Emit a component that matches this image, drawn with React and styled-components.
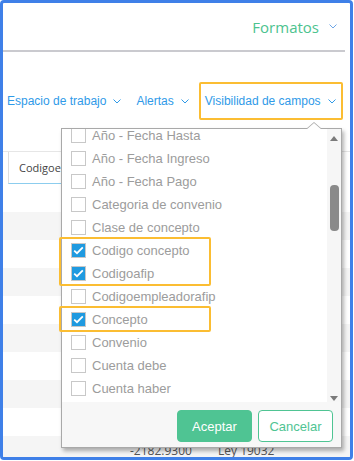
import React from "react"
import styled, { createGlobalStyle } from "styled-components"

const GlobalStyle = createGlobalStyle`
  body {
    margin: 0;
    background: #ffffff;
    font-family: "Liberation Sans", Arial, sans-serif;
  }
`

const fields = [
  { label: "Año - Fecha Hasta" },
  { label: "Año - Fecha Ingreso" },
  { label: "Año - Fecha Pago" },
  { label: "Categoria de convenio" },
  { label: "Clase de concepto" },
  { label: "Codigo concepto", checked: true, group: 1 },
  { label: "Codigoafip", checked: true, group: 1 },
  { label: "Codigoempleadorafip" },
  { label: "Concepto", checked: true, group: 2 },
  { label: "Convenio" },
  { label: "Cuenta debe" },
  { label: "Cuenta haber" },
]

function Chevron({ color }) {
  return (
    <svg width="8" height="5" viewBox="0 0 8 5" style={{ flexShrink: 0 }}>
      <polyline points="0.5,0.5 4,4 7.5,0.5" fill="none" stroke={color} strokeWidth="1" />
    </svg>
  )
}

function Check() {
  return (
    <svg width="11" height="9" viewBox="0 0 11 9">
      <polyline points="1.2,4.6 4,7.2 9.8,1.4" fill="none" stroke="#ffffff" strokeWidth="1.8" />
    </svg>
  )
}

function FieldRow({ field }) {
  return (
    <Item>
      <Box $checked={field.checked}>{field.checked && <Check />}</Box>
      <ItemLabel>{field.label}</ItemLabel>
    </Item>
  )
}

function App() {
  // group the highlighted fields so each group gets one orange frame
  const blocks = []
  fields.forEach((f) => {
    const last = blocks[blocks.length - 1]
    if (f.group && last && last.group === f.group) last.items.push(f)
    else blocks.push({ group: f.group, items: [f] })
  })

  return (
    <>
      <GlobalStyle />
      <Frame>
        <TopBar>
          <Formatos>Formatos</Formatos>
          <Chevron color="#6ea6e6" />
        </TopBar>

        <Toolbar>
          <ToolItem $space={15}>
            Espacio de trabajo <Chevron color="#2f9ae8" />
          </ToolItem>
          <ToolItem $space={10}>
            Alertas <Chevron color="#2f9ae8" />
          </ToolItem>
          <MarkedTool>
            Visibilidad de campos <Chevron color="#2f9ae8" />
          </MarkedTool>
        </Toolbar>

        <Table>
          <HeaderRow>
            <HeaderCell>Codigoe</HeaderCell>
          </HeaderRow>
          {Array.from({ length: 10 }).map((_, i) => (
            <Row key={i} $striped={i % 2 === 1}>
              {i === 9 && (
                <>
                  <Cell />
                  <Cell>-2182.9300</Cell>
                  <Cell>Ley 19032</Cell>
                </>
              )}
            </Row>
          ))}
        </Table>

        <Dropdown>
          <ListArea>
            <Items>
              {blocks.map((b, i) =>
                b.group ? (
                  <Marked key={i}>
                    {b.items.map((f) => (
                      <FieldRow key={f.label} field={f} />
                    ))}
                  </Marked>
                ) : (
                  <FieldRow key={i} field={b.items[0]} />
                )
              )}
            </Items>
            <ScrollTrack>
              <ArrowUp />
              <Thumb />
              <Spacer />
              <ArrowDown />
            </ScrollTrack>
          </ListArea>
          <Footer>
            <PrimaryButton>Aceptar</PrimaryButton>
            <GhostButton>Cancelar</GhostButton>
          </Footer>
        </Dropdown>
      </Frame>
    </>
  )
}

export default App

const Frame = styled.div`
  position: relative;
  box-sizing: border-box;
  width: 353px;
  height: 460px;
  border: 3px solid #3f80e8;
  border-radius: 4px;
  background: #ffffff;
  overflow: hidden;
  display: flex;
  flex-direction: column;
`

const TopBar = styled.div`
  height: 47px;
  flex-shrink: 0;
  margin-right: 5px;
  padding-right: 8px;
  border-bottom: 2px solid #cacacf;
  display: flex;
  align-items: center;
  justify-content: flex-end;
  gap: 10px;
`

const Formatos = styled.span`
  font-family: "Open Sans", sans-serif;
  font-size: 15px;
  color: #4cc38f;
`

const Toolbar = styled.div`
  flex-shrink: 0;
  display: flex;
  align-items: center;
  padding: 30px 0 0 4px;
  margin-bottom: 31px;
`

const ToolItem = styled.div`
  display: flex;
  align-items: center;
  gap: 7px;
  margin-right: ${(p) => p.$space}px;
  font-size: 12px;
  color: #2f9ae8;
  white-space: nowrap;
`

const MarkedTool = styled(ToolItem)`
  box-sizing: border-box;
  height: 38px;
  margin-right: 0;
  padding: 0 5px 0 4px;
  border: 2px solid #fbbd32;
  border-radius: 2px;
`

const Table = styled.div`
  flex-shrink: 0;
  font-family: "Open Sans", sans-serif;
`

const HeaderRow = styled.div`
  height: 33px;
  box-sizing: border-box;
  border-top: 1px solid #e6e6e6;
  padding-left: 5px;
  display: flex;
`

const HeaderCell = styled.div`
  box-sizing: border-box;
  width: 53px;
  border-left: 1px solid #dedede;
  border-bottom: 1px solid #8ccdee;
  padding-left: 10px;
  display: flex;
  align-items: center;
  font-size: 11px;
  color: #444444;
  white-space: nowrap;
  overflow: hidden;
`

const Row = styled.div`
  height: 28px;
  background: ${(p) => (p.$striped ? "#f5f5f5" : "#ffffff")};
  padding-left: 5px;
  display: grid;
  grid-template-columns: 115px 88px 1fr;
  align-items: center;
`

const Cell = styled.div`
  padding-left: 7px;
  font-size: 12px;
  color: #555555;
  white-space: nowrap;
`

const Dropdown = styled.div`
  position: absolute;
  left: 58px;
  top: 125px;
  width: 281px;
  height: 320px;
  box-sizing: border-box;
  border: 1px solid #a9a9a9;
  background: #ffffff;
  box-shadow: 2px 3px 4px rgba(0, 0, 0, 0.3);
  display: flex;
  flex-direction: column;

  &::before,
  &::after {
    content: "";
    position: absolute;
    left: 244px;
    border-left: 8px solid transparent;
    border-right: 8px solid transparent;
  }
  &::before {
    top: -7px;
    border-bottom: 7px solid #a9a9a9;
  }
  &::after {
    top: -6px;
    border-bottom: 7px solid #ffffff;
  }
`

const ListArea = styled.div`
  height: 273px;
  display: flex;
`

const Items = styled.div`
  flex: 1;
  overflow-x: visible;
  overflow-y: clip;
  & > :first-child {
    margin-top: -5px;
  }
`

const Item = styled.div`
  height: 23px;
  display: flex;
  align-items: center;
  gap: 6px;
  padding-left: 9px;
`

const Box = styled.span`
  box-sizing: border-box;
  width: 15px;
  height: 15px;
  border: 1px solid #c8c8c8;
  background: ${(p) => (p.$checked ? "#1f9ae0" : "#ffffff")};
  display: flex;
  align-items: center;
  justify-content: center;
`

const ItemLabel = styled.span`
  font-size: 13px;
  color: #9c9c9c;
  white-space: nowrap;
`

const Marked = styled.div`
  position: relative;
  &::after {
    content: "";
    position: absolute;
    left: -3px;
    top: -2px;
    bottom: -1px;
    width: 152px;
    box-sizing: border-box;
    border: 2px solid #fbbd32;
    border-radius: 2px;
    pointer-events: none;
  }
`

const ScrollTrack = styled.div`
  width: 14px;
  background: #f6f6f6;
  display: flex;
  flex-direction: column;
  align-items: center;
  padding: 7px 0 1px;
  box-sizing: border-box;
`

const ArrowUp = styled.div`
  width: 0;
  height: 0;
  border-left: 4px solid transparent;
  border-right: 4px solid transparent;
  border-bottom: 5px solid #7a7a7a;
`

const ArrowDown = styled.div`
  width: 0;
  height: 0;
  border-left: 4px solid transparent;
  border-right: 4px solid transparent;
  border-top: 5px solid #7a7a7a;
`

const Thumb = styled.div`
  margin-top: 44px;
  width: 9px;
  height: 46px;
  border-radius: 4px;
  background: #8a8a8a;
`

const Spacer = styled.div`
  flex: 1;
`

const Footer = styled.div`
  flex: 1;
  background: #f7f7f7;
  display: flex;
  justify-content: flex-end;
  align-items: flex-start;
  gap: 6px;
  padding: 8px 8px 0 0;
`

const PrimaryButton = styled.button`
  width: 75px;
  height: 32px;
  border: 1px solid #4fc493;
  border-radius: 4px;
  background: #4fc493;
  color: #ffffff;
  font-family: "Liberation Sans", Arial, sans-serif;
  font-size: 13px;
  padding: 0;
`

const GhostButton = styled(PrimaryButton)`
  background: #ffffff;
  color: #4fc493;
`
